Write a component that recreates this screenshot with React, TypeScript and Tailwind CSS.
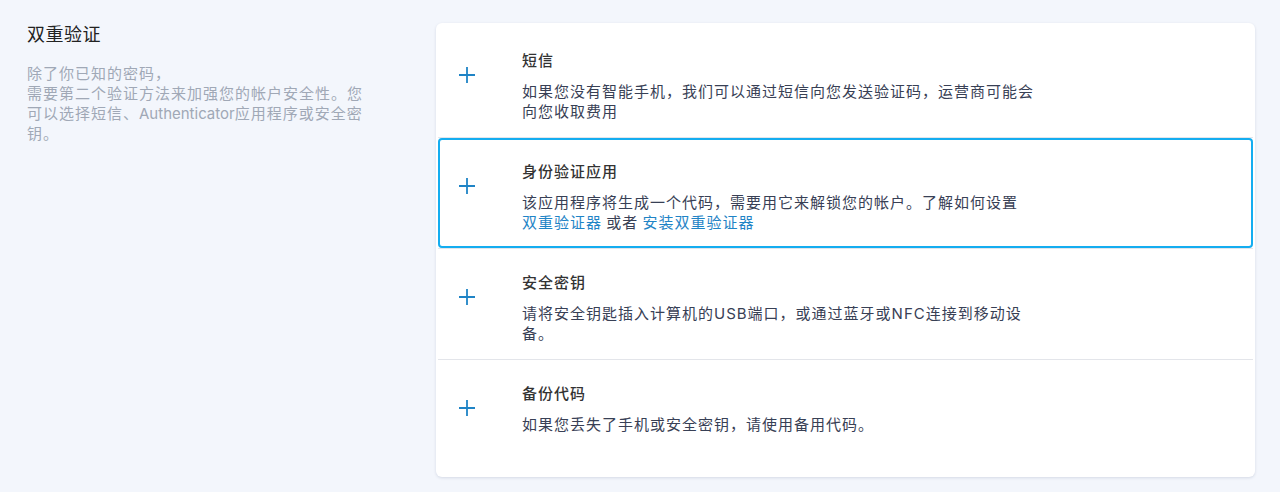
import { useState } from "react";

type Method = {
  id: number;
  title: string;
  lines: React.ReactNode[];
};

const methods: Method[] = [
  {
    id: 0,
    title: "短信",
    lines: [
      "如果您没有智能手机，我们可以通过短信向您发送验证码，运营商可能会",
      "向您收取费用",
    ],
  },
  {
    id: 1,
    title: "身份验证应用",
    lines: [
      "该应用程序将生成一个代码，需要用它来解锁您的帐户。了解如何设置",
      <>
        <a className="text-[#1f84c6] cursor-pointer">双重验证器</a>
        <span className="tracking-normal"> </span>或者
        <span className="tracking-normal"> </span>
        <a className="text-[#1f84c6] cursor-pointer">安装双重验证器</a>
      </>,
    ],
  },
  {
    id: 2,
    title: "安全密钥",
    lines: [
      "请将安全钥匙插入计算机的USB端口，或通过蓝牙或NFC连接到移动设",
      "备。",
    ],
  },
  {
    id: 3,
    title: "备份代码",
    lines: ["如果您丢失了手机或安全密钥，请使用备用代码。"],
  },
];

const PlusIcon = () => (
  <svg width="18" height="18" viewBox="0 0 18 18" fill="none">
    <path d="M9 1v16M1 9h16" stroke="#1f84c6" strokeWidth="1.8" />
  </svg>
);

const App = () => {
  const [selected, setSelected] = useState<number>(1);

  return (
    <div
      className="min-h-[492px] w-full bg-[#f3f6fc] flex pl-[27px] pr-[25px] pt-[23px] pb-[15px]"
      style={{ fontFamily: 'Inter, "Noto Sans CJK SC", sans-serif' }}
    >
      <div className="w-[409px] shrink-0">
        <h2 className="text-[18px] leading-[24px] text-[#222] tracking-[0.5px]">双重验证</h2>
        <div className="mt-[17px] text-[15px] leading-[20px] tracking-[1px] text-[#a0a8b6]">
          <div className="whitespace-nowrap">除了你已知的密码，</div>
          <div className="whitespace-nowrap">需要第二个验证方法来加强您的帐户安全性。您</div>
          <div className="whitespace-nowrap">
            可以选择短信、<span className="tracking-normal">Authenticator</span>应用程序或安全密
          </div>
          <div className="whitespace-nowrap">钥。</div>
        </div>
      </div>

      <div className="flex-1 self-start bg-white rounded-[6px] shadow-[0_1px_3px_rgba(30,50,90,0.14)] pt-[4px] pb-[8px] px-[2px]">
        {methods.map((m, index) => (
          <div
            key={m.id}
            onClick={() => setSelected(index)}
            className={`flex cursor-pointer ${
              index < methods.length - 1 ? "border-b border-b-[#e3e5ea]" : ""
            }`}
          >
            <div
              className={`flex w-full min-h-[109px] rounded-[4px] border-2 pt-[22px] pb-[13px] pl-[18px] ${
                selected === index ? "border-[#14adf0]" : "border-transparent"
              }`}
            >
              <div className="w-[64px] shrink-0 pt-[15px]">
                <PlusIcon />
              </div>
              <div>
                <div className="text-[15px] leading-[20px] tracking-[1px] font-medium text-[#333]">
                  {m.title}
                </div>
                <div className="mt-[11px] text-[15px] leading-[20px] tracking-[1px] text-[#384055]">
                  {m.lines.map((line, i) => (
                    <div key={i} className="whitespace-nowrap">
                      {line}
                    </div>
                  ))}
                </div>
              </div>
            </div>
          </div>
        ))}
      </div>
    </div>
  );
};

export default App;
